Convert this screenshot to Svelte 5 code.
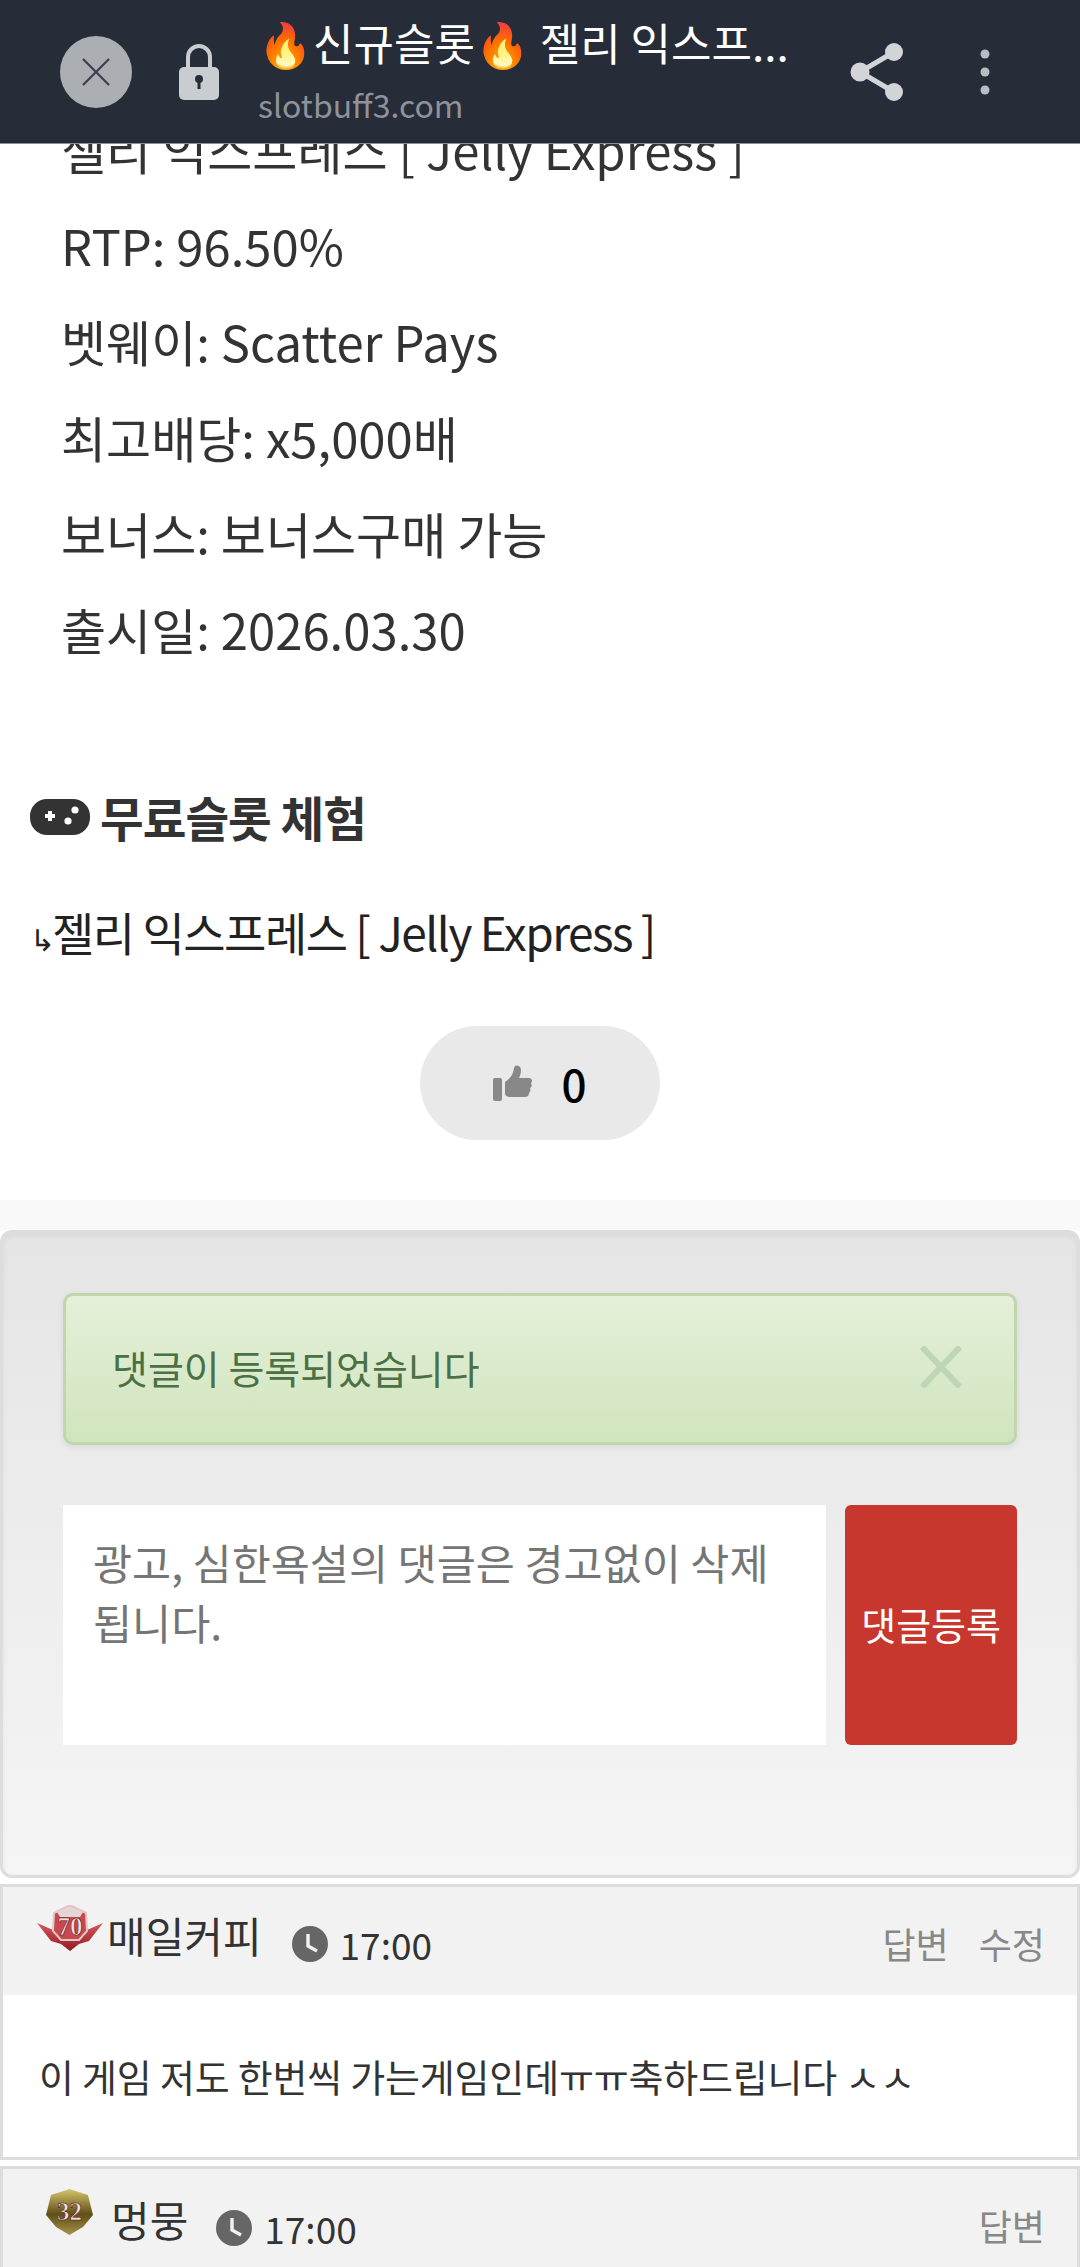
<script lang="ts">
	const specs = [
		{ label: 'RTP', value: '96.50%' },
		{ label: '벳웨이', value: 'Scatter Pays' },
		{ label: '최고배당', value: 'x5,000배' },
		{ label: '보너스', value: '보너스구매 가능' },
		{ label: '출시일', value: '2026.03.30' }
	];
</script>

{#snippet clock()}
	<svg class="clock" viewBox="0 0 36 36" aria-hidden="true">
		<circle cx="18" cy="18" r="18" fill="#666" />
		<path d="M16 8v12l9 5" fill="none" stroke="#f2f2f2" stroke-width="3.4" />
	</svg>
{/snippet}

<div class="page">
	<header class="topbar">
		<button type="button" class="close" aria-label="닫기">
			<svg viewBox="0 0 30 28" width="30" height="28"><path d="M2 1l26 26M28 1L2 27" stroke="#3a3f49" stroke-width="2.2" fill="none" /></svg>
		</button>
		<svg class="lock" viewBox="0 0 42 56" aria-hidden="true">
			<path d="M10 24V13a11 11 0 0 1 22 0v11" fill="none" stroke="#c9ccd0" stroke-width="4" />
			<rect x="1" y="23" width="40" height="33" rx="5" fill="#c9ccd0" />
			<circle cx="21" cy="35" r="4" fill="#272c39" />
			<rect x="19.5" y="36" width="3" height="9" fill="#272c39" />
		</svg>
		<div class="titles">
			<div class="title">🔥신규슬롯🔥 젤리 익스프...</div>
			<div class="url">slotbuff3.com</div>
		</div>
		<svg class="share" viewBox="0 0 54 60" aria-hidden="true">
			<path d="M44 10L10 30l34 20" fill="none" stroke="#d2d4d8" stroke-width="5" />
			<circle cx="44" cy="10" r="9" fill="#d2d4d8" />
			<circle cx="10" cy="30" r="9.5" fill="#d2d4d8" />
			<circle cx="44" cy="50" r="9" fill="#d2d4d8" />
		</svg>
		<svg class="more" viewBox="0 0 10 46" aria-hidden="true">
			<circle cx="5" cy="5" r="4.5" fill="#b9bcc2" />
			<circle cx="5" cy="23" r="4.5" fill="#b9bcc2" />
			<circle cx="5" cy="41" r="4.5" fill="#b9bcc2" />
		</svg>
	</header>

	<article class="post">
		<p class="line">젤리 익스프레스 [ Jelly Express ]</p>
		{#each specs as spec}
			<p class="line">{spec.label}: {spec.value}</p>
		{/each}

		<h3 class="heading">
			<svg class="pad" viewBox="0 0 60 38" aria-hidden="true">
				<rect width="60" height="36" y="1" rx="17" fill="#333" />
				<path d="M15 18h10M20 13v10" stroke="#fff" stroke-width="4" />
				<circle cx="45" cy="12" r="3.6" fill="#fff" />
				<circle cx="38" cy="23" r="3.6" fill="#fff" />
			</svg>
			무료슬롯 체험
		</h3>

		<p class="play"><span class="arrow">↳</span>젤리 익스프레스 [ Jelly Express ]</p>

		<div class="like-row">
			<button type="button" class="like">
				<svg viewBox="0 0 40 36" width="40" height="36" aria-hidden="true">
					<rect x="0" y="13" width="9" height="23" rx="2" fill="#888" />
					<path d="M12 17c5-3 8-7 9-14 1-4 7-3 7 2 0 3-1 6-2 8h10c3 0 4 4 2 5 1 2 1 4-1 5 1 2 0 4-1 5 0 3-2 4-4 4H18c-3 0-6-1-6-3z" fill="#888" />
				</svg>
				<span>0</span>
			</button>
		</div>
	</article>

	<section class="comments">
		<div class="panel">
			<div class="alert">
				<span>댓글이 등록되었습니다</span>
				<svg class="alert-close" viewBox="0 0 42 42" aria-hidden="true">
					<path d="M2 1l38 40M40 1L2 41" stroke="#bed6b3" stroke-width="6" fill="none" />
				</svg>
			</div>
			<div class="form">
				<div class="input">광고, 심한욕설의 댓글은 경고없이 삭제됩니다.</div>
				<button type="button" class="submit">댓글등록</button>
			</div>
		</div>

		<div class="comment">
			<div class="comment-head">
				<svg class="badge wings" viewBox="0 0 66 46" aria-hidden="true">
					<defs>
						<linearGradient id="wing" x1="0" y1="0" x2="0" y2="1">
							<stop offset="0" stop-color="#d9565c" />
							<stop offset="1" stop-color="#8f1c24" />
						</linearGradient>
					</defs>
					<path d="M0 18l16 7 2-1 6 12 9-6 9 6 6-12 2 1 16-7-14 18-10 3-9 7-9-7-10-3z" fill="url(#wing)" />
					<path d="M17 8l16-8 16 8 1 18-8 9H24l-8-9z" fill="#c9474e" stroke="#e3c6c6" stroke-width="2" />
					<path d="M20 7l13-6 13 6-3 5H23z" fill="#e6d5d5" />
					<text x="33" y="30" text-anchor="middle">70</text>
				</svg>
				<span class="nick">매일커피</span>
				{@render clock()}
				<span class="time">17:00</span>
				<span class="actions"><span>답변</span><span>수정</span></span>
			</div>
			<div class="comment-body">이 게임 저도 한번씩 가는게임인데ㅠㅠ축하드립니다 ㅅㅅ</div>
		</div>

		<div class="comment">
			<div class="comment-head second">
				<svg class="badge shield" viewBox="0 0 47 46" aria-hidden="true">
					<defs>
						<linearGradient id="gold" x1="0" y1="0" x2="0" y2="1">
							<stop offset="0" stop-color="#d8c56e" />
							<stop offset="0.55" stop-color="#5f4f16" />
							<stop offset="1" stop-color="#a8934a" />
						</linearGradient>
					</defs>
					<path d="M23.5 0L42 6l5 20-10 12-13.500 8L10 38 0 26 5 6z" fill="url(#gold)" />
					<text x="23.500" y="31" text-anchor="middle">32</text>
				</svg>
				<span class="nick">멍뭉</span>
				{@render clock()}
				<span class="time">17:00</span>
				<span class="actions"><span>답변</span></span>
			</div>
		</div>
	</section>
</div>

<style>
	:global(body) {
		margin: 0;
		background: #fff;
	}

	.page {
		position: relative;
		width: 1080px;
		height: 2267px;
		overflow: hidden;
		font-family: 'Noto Sans CJK KR', 'Noto Sans', sans-serif;
		color: #333;
	}

	.topbar {
		position: absolute;
		top: 0;
		left: 0;
		right: 0;
		z-index: 2;
		height: 143px;
		display: flex;
		align-items: center;
		background: #272c39;
		border-bottom: 1px solid #8c8f94;
	}

	.close {
		width: 72px;
		height: 72px;
		margin-left: 60px;
		padding: 0;
		border: none;
		border-radius: 50%;
		background: #abaeb3;
		display: flex;
		align-items: center;
		justify-content: center;
	}

	.lock {
		width: 42px;
		height: 56px;
		margin-left: 46px;
	}

	.titles {
		width: 560px;
		margin-left: 38px;
		margin-top: -5px;
	}

	.title {
		font-size: 44px;
		line-height: 60px;
		color: #fff;
		white-space: nowrap;
	}

	.url {
		font-size: 32px;
		line-height: 44px;
		margin-top: 10px;
		color: #8f929a;
	}

	.share {
		width: 54px;
		height: 60px;
		margin-left: 32px;
	}

	.more {
		width: 10px;
		height: 46px;
		margin-left: 76px;
	}

	.post {
		padding-top: 112px;
		height: 1200px;
		box-sizing: border-box;
	}

	.line {
		margin: 0 0 0 61px;
		font-size: 49px;
		line-height: 96px;
		white-space: nowrap;
	}

	.line:first-child {
		margin-top: -11px;
	}

	.heading {
		display: flex;
		align-items: center;
		gap: 10px;
		margin: 107px 0 0 30px;
		font-size: 47.5px;
		line-height: 66px;
		font-weight: 700;
		letter-spacing: -1px;
	}

	.pad {
		width: 60px;
		height: 38px;
	}

	.play {
		margin: 48px 0 0 30px;
		font-size: 46px;
		line-height: 66px;
		color: #222;
		letter-spacing: -1.5px;
		white-space: nowrap;
	}

	.arrow {
		display: inline-block;
		width: 22px;
		font-size: 30px;
	}

	.like-row {
		display: flex;
		justify-content: center;
		margin-top: 55px;
	}

	.like {
		display: flex;
		align-items: center;
		justify-content: center;
		gap: 28px;
		width: 240px;
		height: 114px;
		padding: 0;
		border: none;
		border-radius: 57px;
		background: #e9e9e9;
		font: inherit;
		font-size: 44px;
		font-weight: 500;
		color: #000;
	}

	.comments {
		padding-top: 30px;
		background: linear-gradient(#f9f9f9 0, #f9f9f9 30px, #fff 30px);
	}

	.panel {
		height: 648px;
		box-sizing: border-box;
		padding: 60px 60px 0;
		border: 3px solid #ddd;
		border-radius: 12px;
		background: linear-gradient(#e5e5e5, #f5f5f5);
		box-shadow: inset 0 3px 6px rgb(0 0 0 / 0.05);
	}

	.alert {
		display: flex;
		align-items: center;
		justify-content: space-between;
		height: 152px;
		box-sizing: border-box;
		padding: 0 52px 4px 46px;
		border: 3px solid #bfd7ab;
		border-radius: 10px;
		background: linear-gradient(#e4f0d9, #d0e4bd);
		box-shadow: 0 2px 6px rgb(0 0 0 / 0.08);
		font-size: 39px;
		color: #4a7044;
	}

	.alert-close {
		width: 42px;
		height: 42px;
	}

	.form {
		display: flex;
		gap: 19px;
		margin-top: 60px;
	}

	.input {
		width: 764px;
		height: 240px;
		box-sizing: border-box;
		padding: 27px 30px;
		background: #fff;
		font-size: 42.5px;
		line-height: 60px;
		color: #757575;
	}

	.submit {
		width: 172px;
		height: 240px;
		padding: 0 0 4px;
		border: none;
		border-radius: 6px;
		background: #c8372d;
		color: #fff;
		font: inherit;
		font-size: 38px;
		font-weight: 400;
	}

	.comment {
		margin-top: 6px;
		border: 3px solid #ddd;
		background: #fff;
	}

	.comment-head {
		position: relative;
		display: flex;
		align-items: center;
		height: 108px;
		padding: 0 32px;
		background: #f2f2f2;
	}

	.badge {
		flex: none;
	}

	.badge text {
		font-family: 'Liberation Serif', serif;
		font-size: 25px;
		font-weight: 700;
		fill: #f3dede;
		stroke: #4c1216;
		stroke-width: 0.6;
	}

	.wings {
		width: 66px;
		height: 46px;
		margin: -26px 4px 0 2px;
	}

	.shield {
		width: 47px;
		height: 46px;
		margin: -22px 18px 0 11px;
	}

	.nick {
		font-size: 42px;
		margin-top: -14px;
	}

	.second .nick {
		margin-top: -10px;
	}

	.clock {
		width: 36px;
		height: 36px;
		margin-left: 30px;
		margin-top: 6px;
	}

	.second .clock,
	.second .time {
		margin-top: 10px;
	}

	.second .clock {
		margin-left: 28px;
	}

	.time {
		font-size: 37px;
		margin-left: 12px;
		margin-top: 6px;
	}

	.actions {
		display: flex;
		gap: 30px;
		margin-left: auto;
		font-size: 36px;
		color: #888;
		margin-top: 4px;
	}

	.comment-body {
		height: 162px;
		padding-left: 36px;
		box-sizing: border-box;
		font-size: 38px;
		letter-spacing: -0.2px;
		line-height: 162px;
	}
</style>
